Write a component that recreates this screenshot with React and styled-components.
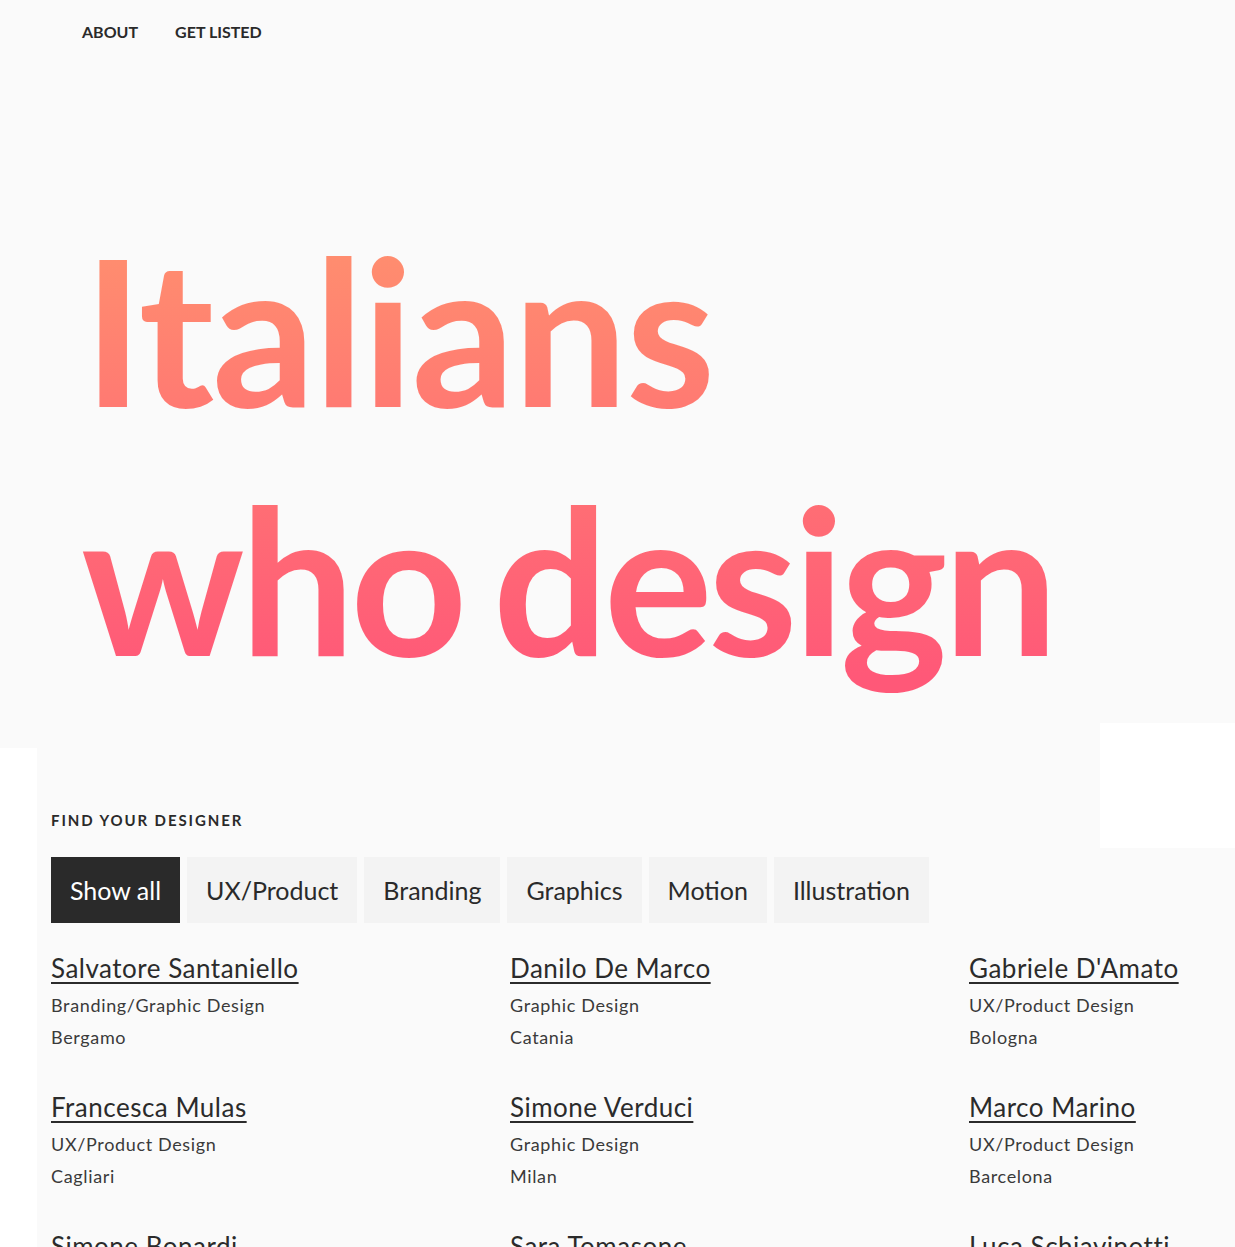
import React from "react";
import styled, { createGlobalStyle } from "styled-components";

const Global = createGlobalStyle`
  html, body { margin: 0; padding: 0; background: #ffffff; }
  body { font-family: Lato, "Open Sans", sans-serif; color: #2a2a2a; }
  * { box-sizing: border-box; }
`;

const Page = styled.div`
  width: 100%;
  overflow: hidden;
`;

const Hero = styled.header`
  background: #fafafa;
  padding: 0 0 46px 0;
`;

const Nav = styled.nav`
  display: flex;
  gap: 37px;
  padding: 23px 0 0 82px;
  height: 204px;
`;

const NavLink = styled.a`
  font-family: Lato, sans-serif;
  font-weight: 700;
  font-size: 16px;
  line-height: 18px;
  text-transform: uppercase;
  color: #2a2a2a;
  text-decoration: none;
`;

const Title = styled.h1`
  margin: 0 0 0 81px;
  font-family: Lato, sans-serif;
  font-weight: 700;
  font-size: 204px;
  line-height: 249px;
  background: linear-gradient(180deg, #ff8d6f 10%, #ff5878 95%);
  -webkit-background-clip: text;
  background-clip: text;
  color: transparent;
  display: inline-block;
  white-space: nowrap;
`;

const Line = styled.span`
  display: block;
  letter-spacing: ${(p) => p.$tracking}px;
  word-spacing: ${(p) => p.$wordGap}px;
  padding-left: ${(p) => p.$indent || 0}px;
`;

const Directory = styled.section`
  position: relative;
  margin-left: 37px;
  background: #fafafa;
  padding: 63px 0 40px 14px;
`;

const Patch = styled.div`
  position: absolute;
  top: -25px;
  right: 0;
  width: 135px;
  height: 125px;
  background: #ffffff;
`;

const Kicker = styled.h2`
  margin: 0;
  font-family: Lato, sans-serif;
  font-weight: 700;
  font-size: 15px;
  line-height: 18px;
  letter-spacing: 1.9px;
  text-transform: uppercase;
  color: #2a2a2a;
`;

const Tabs = styled.div`
  display: flex;
  gap: 7px;
  margin-top: 28px;
`;

const Tab = styled.button`
  height: 66px;
  padding: 0 19px;
  border: 0;
  font-family: Lato, sans-serif;
  font-size: 25px;
  font-weight: 400;
  background: ${(p) => (p.$active ? "#2a2a2a" : "#f3f3f3")};
  color: ${(p) => (p.$active ? "#ffffff" : "#2a2a2a")};
  cursor: pointer;
`;

const Grid = styled.div`
  display: grid;
  grid-template-columns: repeat(3, 459px);
  row-gap: 38px;
  margin-top: 29px;
`;

const Card = styled.div`
  display: flex;
  flex-direction: column;
`;

const Name = styled.a`
  font-family: Lato, sans-serif;
  font-size: 26px;
  line-height: 32px;
  letter-spacing: 0.5px;
  color: #2b2b2b;
  text-decoration: underline;
  text-decoration-thickness: 2px;
  text-underline-offset: 4px;
  margin-bottom: 5px;
  white-space: nowrap;
`;

const Meta = styled.div`
  font-family: Lato, sans-serif;
  font-size: 18px;
  line-height: 32px;
  letter-spacing: 0.65px;
  color: #3a3a3a;
`;

const tabs = ["Show all", "UX/Product", "Branding", "Graphics", "Motion", "Illustration"];

const designers = [
  ["Salvatore Santaniello", "Branding/Graphic Design", "Bergamo"],
  ["Danilo De Marco", "Graphic Design", "Catania"],
  ["Gabriele D'Amato", "UX/Product Design", "Bologna"],
  ["Francesca Mulas", "UX/Product Design", "Cagliari"],
  ["Simone Verduci", "Graphic Design", "Milan"],
  ["Marco Marino", "UX/Product Design", "Barcelona"],
  ["Simone Bonardi", "Graphic Design", "Milan"],
  ["Sara Tomasone", "Illustration", "Rome"],
  ["Luca Schiavinotti", "Motion Design", "Turin"],
];

export default function App() {
  return (
    <Page>
      <Global />
      <Hero>
        <Nav>
          <NavLink href="#">About</NavLink>
          <NavLink href="#">Get listed</NavLink>
        </Nav>
        <Title>
          <Line $tracking={-2.2} $wordGap={-20} $indent={2}>Italians</Line>
          <Line $tracking={-4.7} $wordGap={-15}>who design</Line>
        </Title>
      </Hero>
      <Directory>
        <Patch />
        <Kicker>Find your designer</Kicker>
        <Tabs>
          {tabs.map((t, i) => (
            <Tab key={t} $active={i === 0}>
              {t}
            </Tab>
          ))}
        </Tabs>
        <Grid>
          {designers.map(([n, r, c]) => (
            <Card key={n}>
              <Name href="#">{n}</Name>
              <Meta>{r}</Meta>
              <Meta>{c}</Meta>
            </Card>
          ))}
        </Grid>
      </Directory>
    </Page>
  );
}
